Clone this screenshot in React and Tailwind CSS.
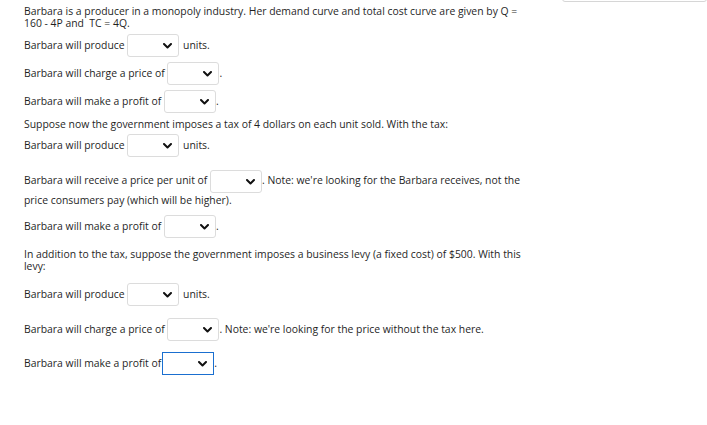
const Chevron = () => (
  <svg width="9" height="6" viewBox="0 0 9 6" className="absolute right-[6px] top-[8px]">
    <polyline points="1,1 4.5,4.5 8,1" fill="none" stroke="#111" strokeWidth="2" strokeLinecap="round" strokeLinejoin="round" />
  </svg>
);

const Select = ({ focused = false, tight = false }) => (
  <span
    className={`relative inline-block align-middle h-[23px] w-[52px] bg-white ${
      tight ? 'my-[-3px]' : ''
    } ${focused ? 'ml-[1px] border border-[#1a6fd0]' : 'border border-[#dcdcdc] rounded-[3px]'}`}
  >
    <Chevron />
  </span>
);

export default function App() {
  return (
    <div
      className="relative min-h-screen bg-white text-[#1f1f1f] text-[10.4px] leading-[11.5px]"
      style={{ fontFamily: '"Open Sans", "Liberation Sans", sans-serif' }}
    >
      <div className="absolute right-0 top-[-21px] h-[23px] w-[145px] border border-[#d6d6d6] rounded-[3px]" />

      <div className="w-[527px] pl-[24px] pt-[6px]">
        <p>
          Barbara is a producer in a monopoly industry. Her demand curve and total cost curve are given by Q =
          160 - 4P and&nbsp; TC = 4Q.
        </p>

        <p className="mt-[4.5px] h-[23px] leading-[23px]">
          Barbara will produce <Select /> <span className="ml-[1px]">units.</span>
        </p>
        <p className="mt-[5px] h-[23px] leading-[23px]">
          Barbara will charge a price of <Select />.
        </p>
        <p className="mt-[5px] h-[23px] leading-[23px]">
          Barbara will make a profit of <Select />.
        </p>

        <p className="mt-[6.75px]">Suppose now the government imposes a tax of 4 dollars on each unit sold. With the tax:</p>

        <p className="mt-[2.75px] h-[23px] leading-[23px]">
          Barbara will produce <Select /> <span className="ml-[1px]">units.</span>
        </p>

        <p className="mt-[13.5px] leading-[20px]">
          Barbara will receive a price per unit of <Select tight />. Note: we're looking for the Barbara receives, not the
          price consumers pay (which will be higher).
        </p>

        <p className="mt-[4.5px] h-[23px] leading-[23px]">
          Barbara will make a profit of <Select />.
        </p>

        <p className="mt-[10.5px] leading-[12px]">
          In addition to the tax, suppose the government imposes a business levy (a fixed cost) of $500. With this
          levy:
        </p>

        <p className="mt-[10.5px] h-[23px] leading-[23px]">
          Barbara will produce <Select /> <span className="ml-[1px]">units.</span>
        </p>
        <p className="mt-[12px] h-[23px] leading-[23px]">
          Barbara will charge a price of <Select />. Note: we're looking for the price without the tax here.
        </p>
        <p className="mt-[11px] h-[23px] leading-[23px]">
          Barbara will make a profit of<Select focused />.
        </p>
      </div>
    </div>
  );
}
